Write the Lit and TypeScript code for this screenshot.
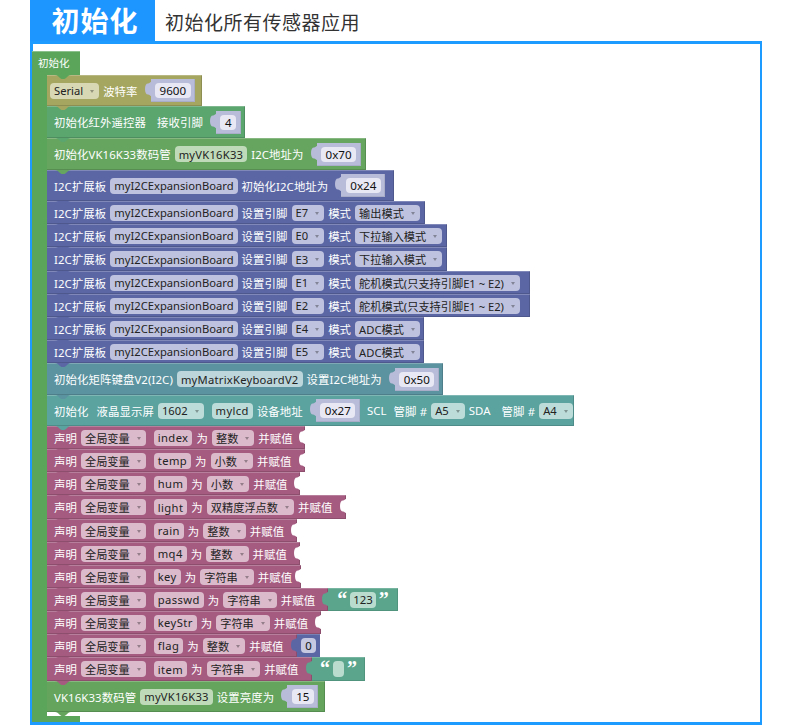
import { LitElement, html, css, nothing } from "lit";
import { customElement } from "lit/decorators.js";

type Item = { k: "t" | "f" | "d" | "v"; s: string; sp?: string };
type Tail = { kind: "str" | "num"; s: string; w: number } | null;
type Row = { c: string; f: string; h: number; w: number; items: Item[]; socket?: boolean; tail?: Tail };

const t = (s: string, sp = ""): Item => ({ k: "t", s, sp });
const f = (s: string, sp = ""): Item => ({ k: "f", s, sp });
const d = (s: string, sp = ""): Item => ({ k: "d", s, sp });
const v = (s: string): Item => ({ k: "v", s });

const I2C = ["#5b67a5", "#bfc2de"];
const DEC = ["#a55b80", "#dbbacb"];

const pin = (pinName: string, mode: string, h: number, w: number): Row => ({
  c: I2C[0], f: I2C[1], h, w,
  items: [t("I2C扩展板"), f("myI2CExpansionBoard"), t("设置引脚"), d(pinName), t("模式"), d(mode)],
});
const dec = (name: string, type: string, h: number, w: number, tail: Tail = null): Row => ({
  c: DEC[0], f: DEC[1], h, w, socket: !tail, tail,
  items: [t("声明"), d("全局变量"), f(name, "nm"), t("为"), d(type), t("并赋值")],
});

const ROWS: Row[] = [
  { c: "#a5a65f", f: "#d8d9b4", h: 31, w: 155, items: [d("Serial", "neg"), t("波特率"), v("9600")] },
  { c: "#5ba56f", f: "#c0dcc8", h: 32, w: 198, items: [t("初始化红外遥控器"), t("接收引脚", "sp2"), v("4")] },
  { c: "#66a55f", f: "#bfdab9", h: 32, w: 319, items: [t("初始化VK16K33数码管"), f("myVK16K33", "ls"), t("I2C地址为"), v("0x70")] },
  { c: I2C[0], f: I2C[1], h: 31, w: 347, items: [t("I2C扩展板"), f("myI2CExpansionBoard"), t("初始化I2C地址为"), v("0x24")] },
  pin("E7", "输出模式", 23, 378),
  pin("E0", "下拉输入模式", 23, 400),
  pin("E3", "下拉输入模式", 24, 400),
  pin("E1", "舵机模式(只支持引脚E1 ~ E2)", 23, 483),
  pin("E2", "舵机模式(只支持引脚E1 ~ E2)", 23, 483),
  pin("E4", "ADC模式", 23, 377),
  pin("E5", "ADC模式", 23, 377),
  { c: "#5b93a0", f: "#bcd6dc", h: 32, w: 396, items: [t("初始化矩阵键盘V2(I2C)"), f("myMatrixKeyboardV2", "ls"), t("设置I2C地址为"), v("0x50")] },
  { c: "#5aa39f", f: "#bbdcd9", h: 31, w: 527, items: [t("初始化"), t("液晶显示屏", "sp1"), d("1602"), f("mylcd", "nm"), t("设备地址"), v("0x27"), t("SCL", "sp"), t("管脚 #", "sp"), d("A5"), t("SDA"), t("管脚 #", "sp2"), d("A4")] },
  dec("index", "整数", 23, 258),
  dec("temp", "小数", 23, 258),
  dec("hum", "小数", 23, 253),
  dec("light", "双精度浮点数", 24, 299),
  dec("rain", "整数", 23, 250),
  dec("mq4", "整数", 23, 253),
  dec("key", "字符串", 23, 254),
  dec("passwd", "字符串", 23, 281, { kind: "str", s: "123", w: 70 }),
  dec("keyStr", "字符串", 23, 274),
  dec("flag", "整数", 23, 250, { kind: "num", s: "0", w: 23 }),
  dec("item", "字符串", 24, 265, { kind: "str", s: "", w: 53 }),
  { c: "#64a45c", f: "#bfdab9", h: 31, w: 278, items: [t("VK16K33数码管"), f("myVK16K33", "ls"), t("设置亮度为"), v("15")] },
];

const LOBE = "M6 0V14C5 14 4.5 12.5 3 12.5C1 12.5 0 10.5 0 7S1 1.5 3 1.5C4.5 1.5 5 0 6 0Z";
const lobe = (cls: string) => html`<svg class="lobe ${cls}" viewBox="0 0 6 14" aria-hidden="true"><path d=${LOBE} fill="currentColor"></path></svg>`;
const TAB = "M0 0C2 0 3 1 5 3C6 4 7 4 8 4S10 4 11 3C13 1 14 0 16 0Z";

@customElement("app-root")
export class AppRoot extends LitElement {
  static styles = css`
    :host { display: block; width: 790px; height: 725px; background: #fff; overflow: hidden;
      font-family: "Noto Sans", "Noto Sans CJK SC", sans-serif; }
    .head { display: flex; height: 41px; padding-left: 30px; }
    .tag { width: 125px; background: #1e96ff; color: #fff; font-size: 28px; font-weight: 700; letter-spacing: 1px;
      font-family: "Noto Sans CJK SC", sans-serif; display: flex; align-items: center; justify-content: center; padding-left: 5px; box-sizing: border-box; line-height: 41px; }
    .title { margin-left: 10px; font-size: 19px; letter-spacing: .5px; color: #333; line-height: 44px;
      font-family: "Noto Sans CJK SC", sans-serif; }
    .frame { margin-left: 30px; width: 732px; height: 684px; box-sizing: border-box; border: 3px solid #1e9bff; border-right-width: 2px; padding-top: 7px; }
    .hat { width: 48px; height: 24px; margin-left: -1px; background: #5ba55b; color: #fff; font-size: 10.5px; line-height: 23px; padding-left: 6px; box-sizing: border-box;
      font-family: "Noto Sans CJK SC", sans-serif; box-shadow: inset 0 1px rgba(255,255,255,.3); }
    .mouth { display: flex; margin-left: -1px; }
    .spine { width: 15px; background: #5ba55b; flex: none; }
    .rows { display: flex; flex-direction: column; }
    .line { display: flex; }
    .row { position: relative; display: flex; align-items: center; gap: 4px; padding-left: 7px; box-sizing: border-box; flex: none;
      color: #fff; font-size: 11.4px; white-space: nowrap;
      box-shadow: inset 0 1px rgba(255,255,255,.22), inset -1px -1px rgba(0,0,0,.14); }
    .tab { position: absolute; left: 8px; top: 0; width: 16px; height: 4px; z-index: 2; }
    .neg { margin-left: -4px; }
    .sp { margin-left: 3px; }
    .sp1 { margin-left: 4px; }
    .sp2 { margin-left: 7px; }
    .fld { display: inline-flex; align-items: center; height: 16px; border-radius: 4px; padding: 0 4px; color: #222; font-size: 11.2px; }
    .fld.ls { letter-spacing: .25px; }
    .fld.nm { letter-spacing: .4px; margin-left: 4px; }
    .arrow { width: 0; height: 0; margin: 1px 1px 0 7px; border-left: 2.5px solid transparent; border-right: 2.5px solid transparent; border-top: 3px solid rgba(0,0,0,.32); }
    .txt { letter-spacing: .1px; }
    .val { position: relative; display: flex; align-items: center; height: 23px; padding: 0 4.5px; margin-left: 9px; background: #b9bcd9; box-shadow: inset -1px -1px rgba(0,0,0,.08); }
    .val .fld { background: #e8e8f4; height: 15px; padding: 0 4.5px; font-size: 11.6px; color: #111; }
    .lobe { position: absolute; left: -6px; top: 3px; width: 6px; height: 14px; display: block; }
    .lobe.sock { color: #b9bcd9; }
    .lobe.str { color: #5ba58c; top: 4px; }
    .lobe.num { color: #5b67a5; top: 4px; }
    .lobe.cut { color: #fff; left: auto; right: 0; top: 4px; }
    .tailb { position: relative; display: flex; align-items: center; justify-content: center; box-sizing: border-box; flex: none; z-index: 1; }
    .tailb.str { background: #5ba58c; gap: 3px; box-shadow: inset 0 1px rgba(255,255,255,.18), inset -1px -1px rgba(0,0,0,.1); }
    .tailb.num { background: #5b67a5; box-shadow: inset 0 1px rgba(255,255,255,.18); }
    .q { color: #fff; font: 700 20px/16px "Liberation Serif", serif; height: 16px; transform: translateY(-1px); }
    .sfld { display: inline-flex; align-items: center; justify-content: center; min-width: 11px; height: 16px; padding: 0 3px; border-radius: 4px; background: #b9dccf; color: #222; font-size: 11.4px; box-sizing: border-box; }
    .nfld { display: inline-flex; align-items: center; justify-content: center; width: 15px; height: 15px; border-radius: 4px; background: #c5c8e0; color: #111; font-size: 11.4px; }
    .gap { display: flex; height: 4px; margin-left: -1px; }
    .gapin { width: 15px; background: #5ba55b; }
    .foot { width: 48px; height: 6px; margin-left: -1px; background: #5ba55b; }
  `;

  private renderItem(i: Item, fill: string) {
    const sp = i.sp ?? "";
    if (i.k === "t") return html`<span class="txt ${sp}">${i.s}</span>`;
    if (i.k === "f") return html`<span class="fld ${sp}" style="background:${fill}">${i.s}</span>`;
    if (i.k === "d") return html`<span class="fld ${sp}" style="background:${fill}">${i.s}<i class="arrow"></i></span>`;
    return html`<span class="val">${lobe("sock")}<span class="fld">${i.s}</span></span>`;
  }

  private renderTail(r: Row) {
    const tl = r.tail;
    if (!tl) return nothing;
    if (tl.kind === "num") {
      return html`<div class="tailb num" style="width:${tl.w}px">${lobe("num")}<span class="nfld">${tl.s}</span></div>`;
    }
    return html`<div class="tailb str" style="width:${tl.w}px">${lobe("str")}<span class="q">“</span><span class="sfld">${tl.s}</span><span class="q">”</span></div>`;
  }

  render() {
    return html`
      <div class="head"><div class="tag">初始化</div><div class="title">初始化所有传感器应用</div></div>
      <div class="frame">
        <div class="hat">初始化</div>
        <div class="mouth">
          <div class="spine"></div>
          <div class="rows">
            ${ROWS.map((r, n) => html`
              <div class="line" style="height:${r.h}px">
                <div class="row" style="width:${r.w}px;height:${r.h}px;background:${r.c}">
                  <svg class="tab" viewBox="0 0 16 4" aria-hidden="true"><path d=${TAB} fill=${n === 0 ? "#5ba55b" : ROWS[n - 1].c}></path></svg>
                  ${r.items.map((i) => this.renderItem(i, r.f))}
                  ${r.socket ? lobe("cut") : nothing}
                </div>
                ${this.renderTail(r)}
              </div>`)}
          </div>
        </div>
        <div class="gap"><div class="gapin"></div><svg width="24" height="4" viewBox="0 0 24 4" style="margin-left:8px" aria-hidden="true"><path d=${TAB} fill="#64a45c"></path></svg></div>
        <div class="foot"></div>
      </div>
    `;
  }
}
